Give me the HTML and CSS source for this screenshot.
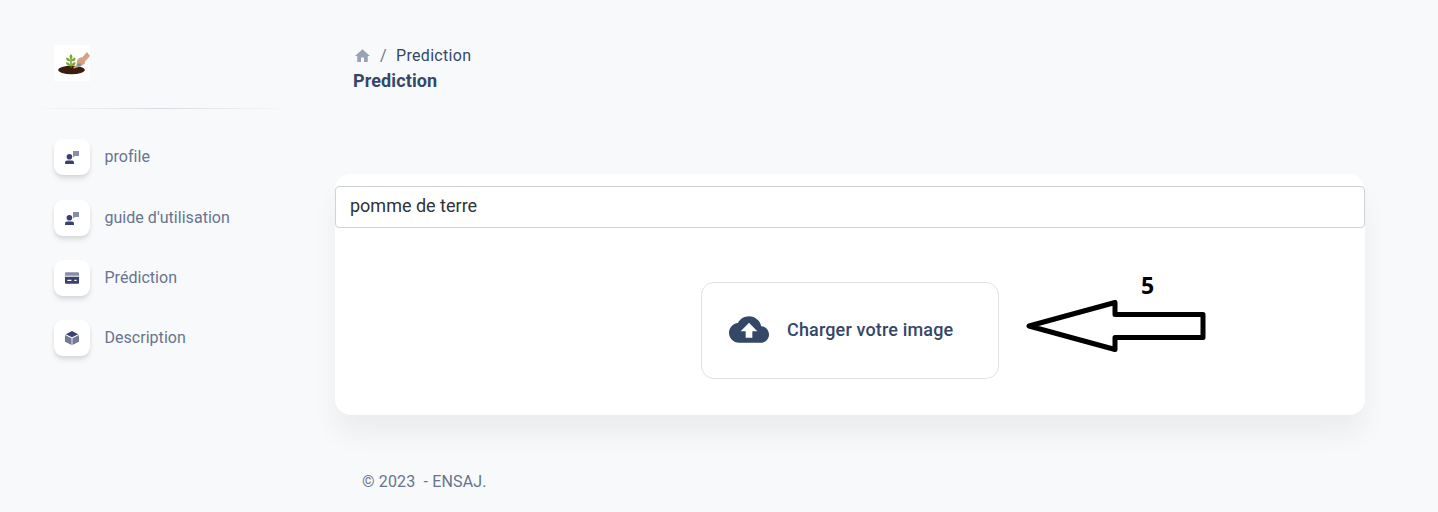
FILE: index.html
```html
<!DOCTYPE html>
<html lang="fr">
<head>
<meta charset="utf-8">
<title>Prediction</title>
<link rel="stylesheet" href="styles.css">
</head>
<body>
<svg width="0" height="0" class="defs">
  <symbol id="person" viewBox="0 0 14 13">
    <path opacity=".6" d="M8 0h6v5h-4L8 6.300z"/>
    <circle cx="4.400" cy="5.700" r="2.800"/>
    <path d="M0 13V11.500Q0 9.500 2 9.500H7Q9 9.500 9 11.500V13Z"/>
  </symbol>
</svg>
<div class="layout">
  <aside class="sidebar">
    <svg class="logo" viewBox="0 0 36 36">
      <rect width="36" height="36" fill="#fff"/>
      <ellipse cx="17.500" cy="25" rx="13.300" ry="4.200" fill="#3a1d0c"/>
      <path d="M17 23V11" stroke="#557d1c" stroke-width="1.200"/>
      <path d="M17 9c2 2 2 4 0 5-2-1-2-3 0-5zM16.500 16c-1.200-3-3-3.500-4.500-3 .4 2.500 2 4 4.500 3zM17.500 16c.8-3 2.500-3.500 4-3 0 2.500-1.500 4-4 3zM16.500 20.500c-1-3-3-3.500-4.500-3 .4 2.500 2 4 4.500 3zM17.500 20.500c.8-3 2.500-3.500 4-3 0 2.500-1.500 4-4 3z" fill="#76a92c"/>
      <path d="M33 7L36 11 31 16.500 30.500 19 26 21.500 20 23.500 19 22.500 22.500 20 23 15.500 25 13 28.500 12Z" fill="#d9a084"/>
      <path d="M23 19l3.500-1 .5 2.500-3 1.300z" fill="#5b9eb2"/>
    </svg>
    <div class="divider"></div>
    <nav class="menu">
      <a class="item"><span class="tile"><svg class="person"><use href="#person"/></svg></span>profile</a>
      <a class="item second"><span class="tile"><svg class="person"><use href="#person"/></svg></span>guide d'utilisation</a>
      <a class="item"><span class="tile"><svg class="card-icon" viewBox="0 0 43 36"><path opacity=".6" d="M43 10.750V3.600C43 1.600 41.400 0 39.400 0H3.600C1.600 0 0 1.600 0 3.600v7.150z"/><path fill-rule="evenodd" d="M0 14.500v17.750c0 2 1.600 3.600 3.600 3.600h35.800c2 0 3.600-1.600 3.600-3.600V14.500zM19.700 26.900H7.200v-3.600h12.500zM35.800 26.900h-7.100v-3.600h7.100z"/></svg></span>Prédiction</a>
      <a class="item"><span class="tile"><svg class="box-icon" viewBox="0 0 42 42"><path d="M21 0L2.500 9.500 21 18.700l18.500-9.200z"/><path opacity=".7" d="M0 12v20.500L19.800 42V21.500zM42 12v20.500L22.200 42V21.500z"/></svg></span>Description</a>
    </nav>
  </aside>
  <main class="main">
    <header class="header">
      <div class="crumbs">
        <svg class="home" viewBox="0 0 20 17"><path d="M8 17v-6h4v6h5V9h3L10 0 0 9h3v8z"/></svg>
        <span class="slash">/</span><span class="current">Prediction</span>
      </div>
      <h1 class="title">Prediction</h1>
    </header>
    <section class="panel">
      <div class="select">pomme de terre</div>
      <div class="upload-row">
        <div class="upload">
          <svg class="cloud" viewBox="0 4 24 16"><path d="M19.350 10.040C18.670 6.590 15.640 4 12 4 9.110 4 6.600 5.640 5.350 8.040 2.340 8.360 0 10.910 0 14c0 3.310 2.690 6 6 6h13c2.760 0 5-2.240 5-5 0-2.640-2.050-4.780-4.650-4.960zM14 13v4h-4v-4H7l5-5 5 5h-3z"/></svg>
          <span>Charger votre image</span>
        </div>
        <div class="note">
          <span class="step">5</span>
          <svg class="arrow" viewBox="0 0 180 52"><path d="M3 26L89 2.500V14.500H177V37.500H89V49.500Z"/></svg>
        </div>
      </div>
    </section>
    <footer class="footer">© 2023&nbsp; - ENSAJ.</footer>
  </main>
</div>
</body>
</html>
```
FILE: styles.css
```css
* { box-sizing: border-box; }
body {
  margin: 0;
  height: 512px;
  overflow: hidden;
  background: #f8f9fb;
  color: #67748e;
  font: 16px/24px Roboto, sans-serif;
}
.defs { display: block; }
.layout { display: grid; grid-template-columns: 335px 1030px; }
.sidebar { padding: 45px 51px 0 30px; }
.logo { display: block; width: 36px; height: 36px; margin-left: 24px; }
.divider {
  height: 1px;
  width: 262px;
  margin-top: 27px;
  background: linear-gradient(90deg, transparent, #d8dbe1, transparent);
}
.menu { display: flex; flex-direction: column; gap: 24px; padding: 30px 0 0 24px; }
.item { display: flex; align-items: center; gap: 14.500px; height: 36px; letter-spacing: .03px; white-space: nowrap; }
.second { margin-top: 1px; }
.tile {
  display: flex;
  align-items: center;
  justify-content: center;
  width: 36px;
  height: 36px;
  border-radius: 9px;
  background: #fff;
  box-shadow: 0 4px 6px -1px rgba(20, 20, 20, .12), 0 2px 4px -1px rgba(20, 20, 20, .07);
  fill: #3a416f;
}
.person { width: 14px; height: 13px; }
.card-icon { width: 14px; height: 12px; margin-bottom: 1px; }
.box-icon { width: 14px; height: 14px; }
.header { height: 174px; padding: 44px 0 0 18px; color: #344767; }
.crumbs { display: flex; align-items: center; height: 24px; }
.home { width: 15px; height: 13px; margin: 0 0 2px 2px; fill: #99a3b3; }
.slash { padding: 0 9px 0 10px; color: #6c757d; }
.current { padding-left: .5px; letter-spacing: .3px; }
.title { margin: 0; font-size: 18px; line-height: 26px; font-weight: 700; letter-spacing: .12px; }
.panel {
  height: 241px;
  padding-top: 12px;
  border-radius: 16px;
  background: #fff;
  box-shadow: 0 20px 27px rgba(0, 0, 0, .05);
}
.select {
  height: 42px;
  padding: 0 14px;
  border: 1px solid #ced4da;
  border-radius: 4px;
  background: #fff;
  color: #2e3338;
  font-size: 18px;
  line-height: 37px;
}
.upload-row { display: grid; grid-template-columns: 298px 206px; column-gap: 27px; padding: 43px 0 0 366px; }
.upload {
  display: flex;
  align-items: center;
  gap: 18px;
  height: 97px;
  margin-top: 11px;
  padding: 0 0 2px 27px;
  border: 1px solid #dee2e6;
  border-radius: 13px;
  color: #344767;
  font-size: 18px;
  font-weight: 500;
  letter-spacing: .15px;
  white-space: nowrap;
}
.cloud { width: 40px; height: 27px; fill: #344767; }
.note { display: flex; flex-direction: column; }
.step {
  margin-left: 115px;
  color: #000;
  font: 700 23px/29px "Noto Sans", sans-serif;
}
.arrow { width: 180px; height: 52px; }
.arrow path { fill: #fff; stroke: #000; stroke-width: 5; stroke-linejoin: round; }
.footer { padding: 55px 0 0 27px; letter-spacing: .14px; }
```
